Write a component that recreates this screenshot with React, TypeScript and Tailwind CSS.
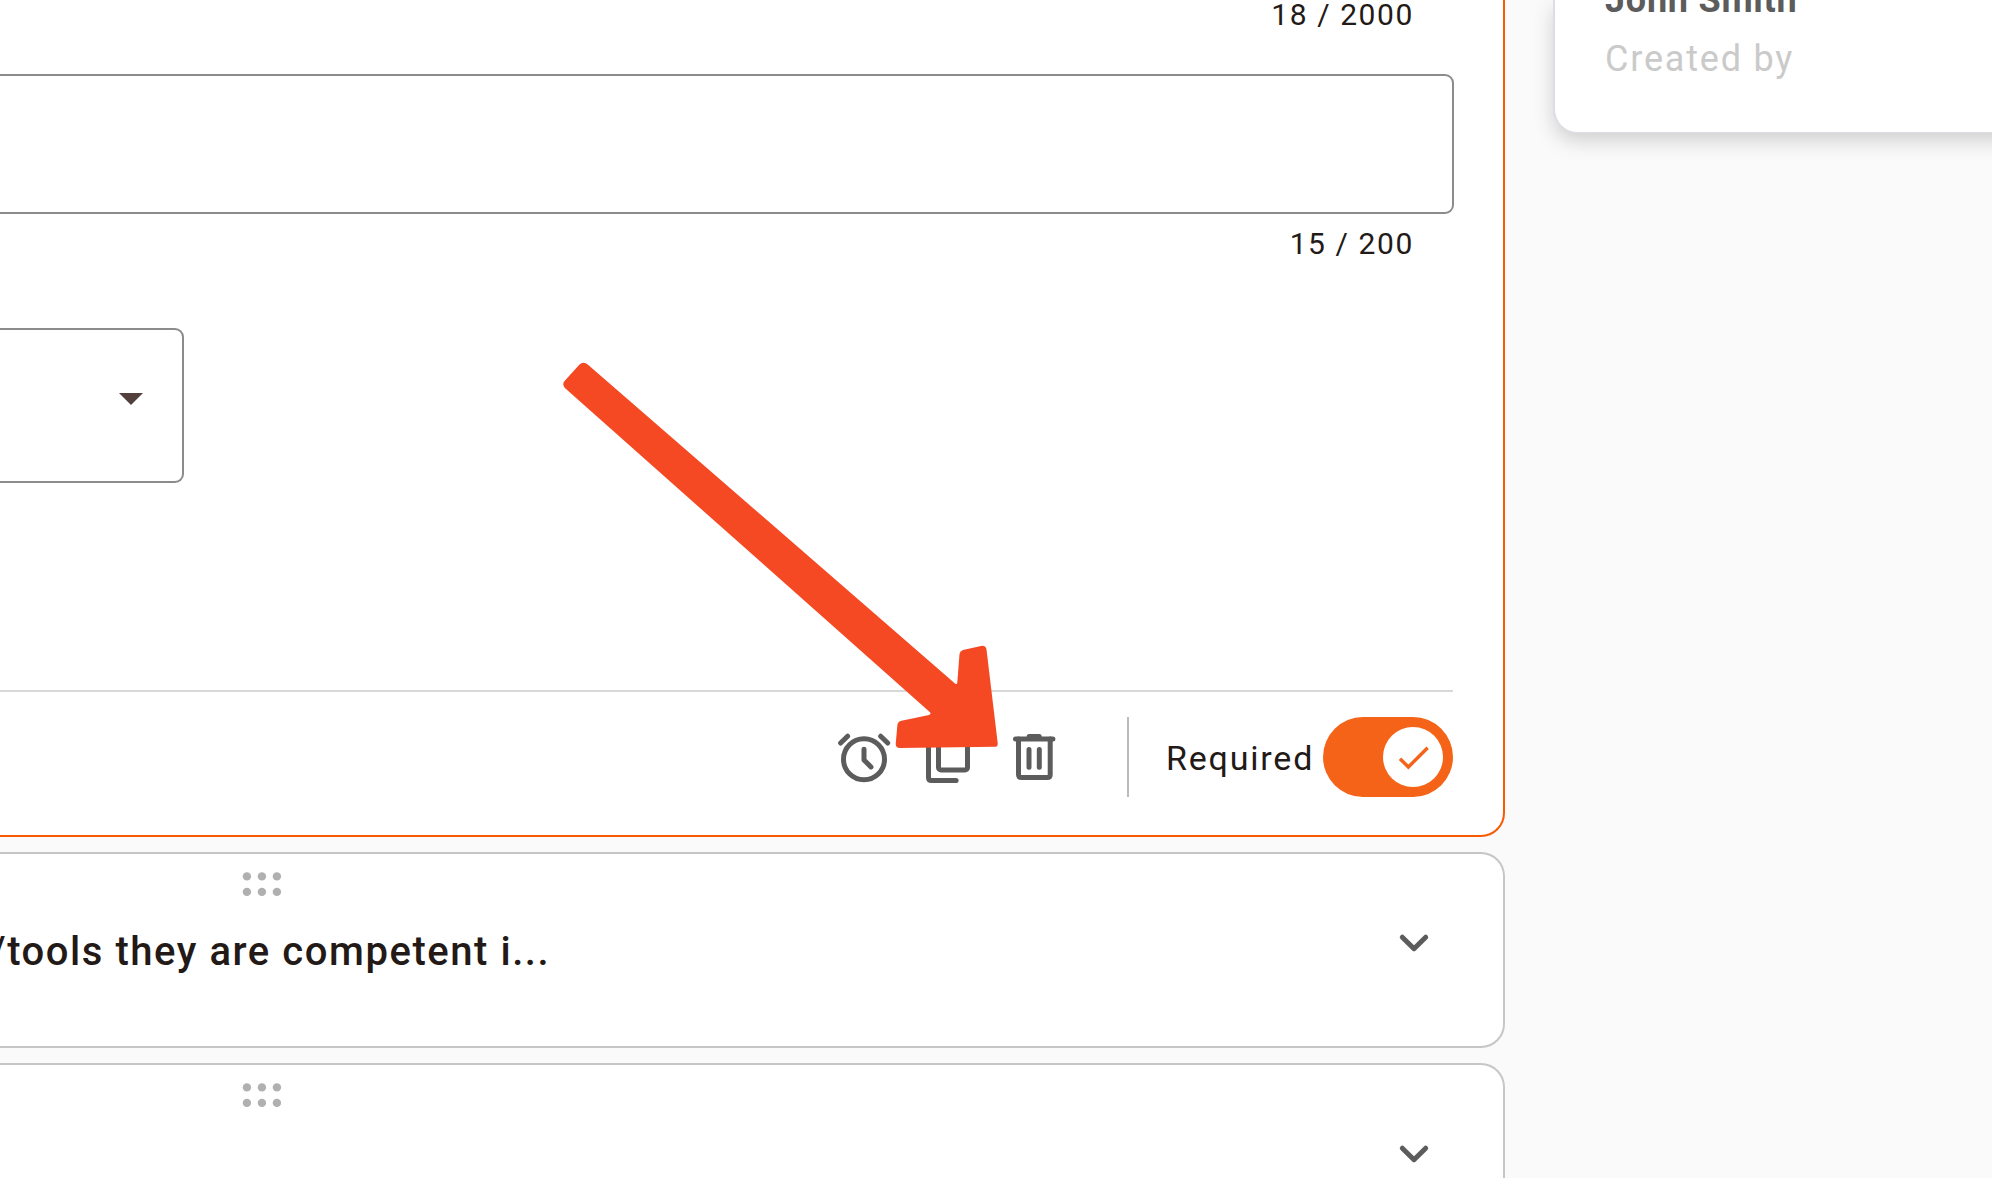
import type { ReactNode } from "react";

function Counter({ children }: { children: ReactNode }) {
  return (
    <div className="h-10 pr-[39px] text-right text-[30px] leading-10 tracking-[1.6px] text-[#231a17]">{children}</div>
  );
}

function AlarmIcon() {
  return (
    <svg className="h-[60px] w-[60px]" viewBox="834 727 60 60" fill="none" stroke="#5c5c5c" strokeWidth="5" strokeLinecap="round" strokeLinejoin="round">
      <circle cx="864" cy="759.3" r="20.5" />
      <path d="M864 749.3v10.6l7 7M840.6 743l7-6.8M880.7 736.2l7 6.8" />
    </svg>
  );
}

function CopyIcon() {
  return (
    <svg className="h-[60px] w-[60px]" viewBox="918 727 60 60" fill="none" stroke="#5c5c5c" strokeWidth="5" strokeLinecap="round">
      <rect x="938.5" y="737.5" width="29" height="32.5" rx="2.5" />
      <path d="M928.5 744v33.5q0 3 3 3h24.6" />
    </svg>
  );
}

function TrashIcon() {
  return (
    <svg className="h-[60px] w-[60px]" viewBox="1004 727 60 60" fill="none" stroke="#5c5c5c" strokeWidth="5" strokeLinecap="round">
      <path d="M1015.5 739h37.4M1029.2 736.5h10" />
      <path d="M1018.5 739v35.5q0 3 3 3h25.7q3 0 3-3V739M1029 749.5v17.7M1039.3 749.5v17.7" />
    </svg>
  );
}

function DragHandle() {
  return (
    <svg className="ml-[240px] h-7 w-11 shrink-0" viewBox="0 0 44 28" fill="#b0b0b0">
      {[6.9, 21.9, 36.9].map((x) => (
        <g key={x}>
          <circle cx={x} cy="6.4" r="4.2" />
          <circle cx={x} cy="21.9" r="4.2" />
        </g>
      ))}
    </svg>
  );
}

function CollapsedQuestion({ title }: { title?: string }) {
  return (
    <section className="h-[196px] w-[1505px] shrink-0 rounded-r-3xl border-2 border-l-0 border-[#c6c6c6] bg-white pt-4">
      <DragHandle />
      <div className="mt-[4px] flex h-[90px] items-center justify-between pr-[69px]">
        <p className="-ml-[10px] mt-[9px] whitespace-nowrap text-[40px] font-medium leading-[48px] tracking-[1.55px] text-[#231a17]">{title}</p>
        <svg className="-mt-[8px] h-10 w-10" viewBox="0 0 40 40" fill="none" stroke="#5c5c5c" strokeWidth="5" strokeLinecap="round" strokeLinejoin="round">
          <path d="M8.3 14.2 20 25.7l11.7-11.5" />
        </svg>
      </div>
    </section>
  );
}

function RequiredSwitch() {
  return (
    <button role="switch" aria-checked="true" className="flex h-20 w-[130px] items-center justify-end rounded-full bg-[#f46318] pr-2.5">
      <span className="flex h-[60px] w-[60px] items-center justify-center rounded-full bg-white">
        <svg className="h-[41px] w-[41px]" viewBox="0 0 24 24" fill="#f46318">
          <path d="M9 16.17 4.83 12l-1.42 1.41L9 19 21 7l-1.41-1.41z" />
        </svg>
      </span>
    </button>
  );
}

function ActiveQuestion() {
  return (
    <section className="h-[837px] w-[1505px] shrink-0 rounded-br-3xl border-b-2 border-r-2 border-[#f85a04] bg-white pr-[50px]">
      <div className="-mt-[5px]">
        <Counter>18 / 2000</Counter>
      </div>
      <div className="-mr-px mt-[39px] h-[140px] rounded-r-[9px] border-2 border-l-0 border-[#8c8c8c]" />
      <div className="mt-[10px]">
        <Counter>15 / 200</Counter>
      </div>
      <div className="mt-[64px] flex h-[155px] w-[184px] justify-end rounded-r-[9px] border-2 border-l-0 border-[#8c8c8c] pr-[39px] pt-[63px]">
        <svg className="h-3 w-6" viewBox="0 0 24 12" fill="#53403c">
          <path d="M0 0h24L12 12z" />
        </svg>
      </div>
      <footer className="mt-[207px] flex h-[107px] items-end justify-end border-t-2 border-[#d8d8d8]">
        <div className="mb-[10px] mr-[63px] flex">
          <AlarmIcon />
          <div className="ml-6"><CopyIcon /></div>
          <div className="ml-[26px]"><TrashIcon /></div>
        </div>
        <div className="h-20 border-l-2 border-[#bbb]" />
        <span className="mb-[17px] ml-[37px] w-[157px] whitespace-nowrap text-[34px] leading-[44px] tracking-[1.8px] text-[#231a17]">Required</span>
        <RequiredSwitch />
      </footer>
    </section>
  );
}

function PointerArrow() {
  return (
    <svg className="absolute left-[560px] top-[355px] h-[400px] w-[445px]" viewBox="560 355 445 400" fill="#f54924">
      <path d="M588.3 365 955 683.4Q957 685 957.3 682.5L959.5 654Q960 650.8 963 650L981 645.9Q985.8 645 986.5 649.5L997.7 743Q998 746.7 995 746.8L900 748Q895.5 748 895.7 744L897.4 725Q897.8 721.6 901.5 720.8L929 715Q931.5 714.2 930 712.3L566 389Q561 384.5 565 380.5L579.5 364.5Q583.5 361 588.3 365Z" />
    </svg>
  );
}

export default function App() {
  return (
    <main className="relative flex h-[1178px] w-[1992px] justify-between overflow-hidden bg-[#fafafa] font-['Roboto',sans-serif]">
      <div className="flex flex-col gap-[15px]">
        <ActiveQuestion />
        <CollapsedQuestion title="/tools they are competent i..." />
        <CollapsedQuestion />
      </div>
      <aside className="-mr-[61px] h-[133px] w-[500px] shrink-0 rounded-bl-3xl border-b border-l-2 border-[#dddde5] bg-white pl-[50px] shadow-[0_8px_20px_rgba(0,0,0,0.17)]">
        <p className="-mt-[22px] whitespace-nowrap text-[36px] font-bold leading-[44px] tracking-[0.75px] text-[#5c5c5c]">John Smith</p>
        <p className="mt-[15px] whitespace-nowrap text-[36px] leading-[44px] tracking-[1.8px] text-[#cacaca]">Created by</p>
      </aside>
      <PointerArrow />
    </main>
  );
}
